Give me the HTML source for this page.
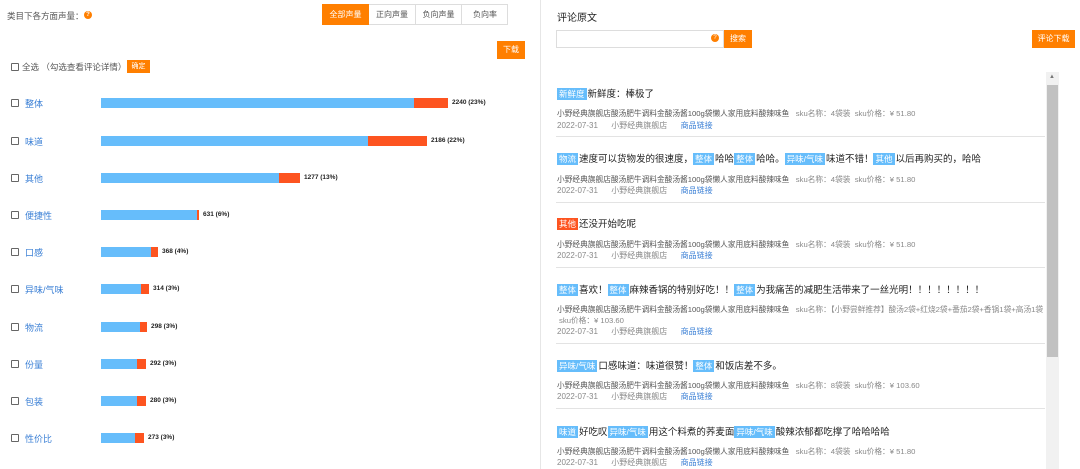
<!DOCTYPE html><html><head><meta charset="utf-8"><style>
*{margin:0;padding:0;box-sizing:border-box}
body{width:1080px;height:469px;overflow:hidden;background:#fff;font-family:"Liberation Sans","Noto Sans CJK SC",sans-serif;color:#333;position:relative;font-size:9px}
.a{position:absolute;white-space:nowrap}
.btn{background:#ff7f00;color:#fff;text-align:center}
.cb{width:8px;height:8px;border:1px solid #666;border-radius:1px}
.lab{color:#3a7fd5;font-size:9px}
.b{position:absolute;height:10px;background:#66bdfb}
.r{position:absolute;height:10px;background:#fd5420}
.v{font-size:6.5px;font-weight:bold;color:#222}
.t{font-size:9.5px;color:#222}
.tg{background:#66bdfb;color:#fff;padding:0 2px;font-size:8.5px;display:inline-block;line-height:12px;margin-right:1px}
.g{font-size:7.7px;color:#555}
.d{font-size:8px;color:#888}
.d i{font-style:normal;color:#3a7fd5}
.sep{position:absolute;left:556px;width:489px;height:1px;background:#e3e3e3}
</style></head><body>
<div class="a" style="left:7px;top:10px;font-size:8.5px;color:#555">类目下各方面声量：</div>
<div class="a" style="left:84px;top:11px;width:8px;height:8px;border-radius:50%;background:#ff7f00;color:#fff;font-size:6px;text-align:center;line-height:8px;font-weight:bold">?</div>
<div class="a" style="left:322px;top:4px;width:186px;height:21px;border:1px solid #ddd"></div>
<div class="a btn" style="left:322px;top:4px;width:47px;height:21px;line-height:21px;font-size:8px">全部声量</div>
<div class="a" style="left:369px;top:4px;width:47px;height:21px;line-height:21px;font-size:8px;color:#555;text-align:center;border-right:1px solid #ddd">正向声量</div>
<div class="a" style="left:416px;top:4px;width:46px;height:21px;line-height:21px;font-size:8px;color:#555;text-align:center;border-right:1px solid #ddd">负向声量</div>
<div class="a" style="left:462px;top:4px;width:46px;height:21px;line-height:21px;font-size:8px;color:#555;text-align:center">负向率</div>
<div class="a btn" style="left:497px;top:41px;width:28px;height:18px;line-height:18px;font-size:8px">下载</div>
<div class="a cb" style="left:11px;top:63px"></div>
<div class="a" style="left:22px;top:61px;font-size:8.5px;color:#555">全选 （勾选查看评论详情）</div>
<div class="a btn" style="left:127px;top:60px;width:23px;height:13px;line-height:13px;font-size:7px">确定</div>

<div class="a cb" style="left:11px;top:99px"></div><div class="a lab" style="left:25px;top:97px">整体</div><div class="b" style="left:101px;top:98px;width:313px"></div><div class="r" style="left:414px;top:98px;width:34px"></div><div class="a v" style="left:452px;top:99px">2240 (23%)</div>
<div class="a cb" style="left:11px;top:137px"></div><div class="a lab" style="left:25px;top:135px">味道</div><div class="b" style="left:101px;top:136px;width:267px"></div><div class="r" style="left:368px;top:136px;width:59px"></div><div class="a v" style="left:431px;top:137px">2186 (22%)</div>
<div class="a cb" style="left:11px;top:174px"></div><div class="a lab" style="left:25px;top:172px">其他</div><div class="b" style="left:101px;top:173px;width:178px"></div><div class="r" style="left:279px;top:173px;width:21px"></div><div class="a v" style="left:304px;top:174px">1277 (13%)</div>
<div class="a cb" style="left:11px;top:211px"></div><div class="a lab" style="left:25px;top:209px">便捷性</div><div class="b" style="left:101px;top:210px;width:96px"></div><div class="r" style="left:197px;top:210px;width:2px"></div><div class="a v" style="left:203px;top:211px">631 (6%)</div>
<div class="a cb" style="left:11px;top:248px"></div><div class="a lab" style="left:25px;top:246px">口感</div><div class="b" style="left:101px;top:247px;width:50px"></div><div class="r" style="left:151px;top:247px;width:7px"></div><div class="a v" style="left:162px;top:248px">368 (4%)</div>
<div class="a cb" style="left:11px;top:285px"></div><div class="a lab" style="left:25px;top:283px">异味/气味</div><div class="b" style="left:101px;top:284px;width:40px"></div><div class="r" style="left:141px;top:284px;width:8px"></div><div class="a v" style="left:153px;top:285px">314 (3%)</div>
<div class="a cb" style="left:11px;top:323px"></div><div class="a lab" style="left:25px;top:321px">物流</div><div class="b" style="left:101px;top:322px;width:39px"></div><div class="r" style="left:140px;top:322px;width:7px"></div><div class="a v" style="left:151px;top:323px">298 (3%)</div>
<div class="a cb" style="left:11px;top:360px"></div><div class="a lab" style="left:25px;top:358px">份量</div><div class="b" style="left:101px;top:359px;width:36px"></div><div class="r" style="left:137px;top:359px;width:9px"></div><div class="a v" style="left:150px;top:360px">292 (3%)</div>
<div class="a cb" style="left:11px;top:397px"></div><div class="a lab" style="left:25px;top:395px">包装</div><div class="b" style="left:101px;top:396px;width:36px"></div><div class="r" style="left:137px;top:396px;width:9px"></div><div class="a v" style="left:150px;top:397px">280 (3%)</div>
<div class="a cb" style="left:11px;top:434px"></div><div class="a lab" style="left:25px;top:432px">性价比</div><div class="b" style="left:101px;top:433px;width:34px"></div><div class="r" style="left:135px;top:433px;width:9px"></div><div class="a v" style="left:148px;top:434px">273 (3%)</div>

<div class="a" style="left:540px;top:0;width:1px;height:469px;background:#e6e6e6"></div>
<div class="a" style="left:557px;top:9px;font-size:10px;color:#222">评论原文</div>
<div class="a" style="left:556px;top:30px;width:168px;height:18px;border:1px solid #ddd"></div>
<div class="a" style="left:711px;top:34px;width:8px;height:8px;border-radius:50%;background:#ff7f00;color:#fff;font-size:6px;text-align:center;line-height:8px">?</div>
<div class="a btn" style="left:724px;top:30px;width:28px;height:18px;line-height:18px;font-size:8px">搜索</div>
<div class="a btn" style="left:1032px;top:30px;width:43px;height:18px;line-height:18px;font-size:8px">评论下载</div>
<div class="a" style="left:1046px;top:72px;width:13px;height:397px;background:#f1f1f1"></div>
<div class="a" style="left:1047px;top:85px;width:11px;height:272px;background:#c1c1c1"></div>
<div class="a" style="left:1049px;top:74px;font-size:6px;color:#777">▲</div>

<div class="a t" style="left:557px;top:86px"><span class="tg">新鲜度</span>新鲜度：棒极了</div>
<div class="a g" style="left:557px;top:108px">小野经典旗舰店酸汤肥牛调料金酸汤酱100g袋懒人家用底料酸辣味鱼 &nbsp;&nbsp;<span style="color:#888">sku名称：4袋装 &nbsp;sku价格：¥ 51.80</span></div>
<div class="a d" style="left:557px;top:120px">2022-07-31 &nbsp;&nbsp;&nbsp;&nbsp;&nbsp;小野经典旗舰店 &nbsp;&nbsp;&nbsp;&nbsp;&nbsp;<i>商品链接</i></div>
<div class="sep" style="top:136px"></div>

<div class="a t" style="left:557px;top:151px"><span class="tg">物流</span>速度可以货物发的很速度，<span class="tg">整体</span>哈哈<span class="tg">整体</span>哈哈。<span class="tg">异味/气味</span>味道不错！<span class="tg">其他</span>以后再购买的，哈哈</div>
<div class="a g" style="left:557px;top:174px">小野经典旗舰店酸汤肥牛调料金酸汤酱100g袋懒人家用底料酸辣味鱼 &nbsp;&nbsp;<span style="color:#888">sku名称：4袋装 &nbsp;sku价格：¥ 51.80</span></div>
<div class="a d" style="left:557px;top:185px">2022-07-31 &nbsp;&nbsp;&nbsp;&nbsp;&nbsp;小野经典旗舰店 &nbsp;&nbsp;&nbsp;&nbsp;&nbsp;<i>商品链接</i></div>
<div class="sep" style="top:202px"></div>

<div class="a t" style="left:557px;top:216px"><span class="tg" style="background:#fd5420">其他</span>还没开始吃呢</div>
<div class="a g" style="left:557px;top:239px">小野经典旗舰店酸汤肥牛调料金酸汤酱100g袋懒人家用底料酸辣味鱼 &nbsp;&nbsp;<span style="color:#888">sku名称：4袋装 &nbsp;sku价格：¥ 51.80</span></div>
<div class="a d" style="left:557px;top:250px">2022-07-31 &nbsp;&nbsp;&nbsp;&nbsp;&nbsp;小野经典旗舰店 &nbsp;&nbsp;&nbsp;&nbsp;&nbsp;<i>商品链接</i></div>
<div class="sep" style="top:267px"></div>

<div class="a t" style="left:557px;top:282px"><span class="tg">整体</span>喜欢！<span class="tg">整体</span>麻辣香锅的特别好吃！！<span class="tg">整体</span>为我痛苦的减肥生活带来了一丝光明！！！！！！！！</div>
<div class="a g" style="left:557px;top:304px">小野经典旗舰店酸汤肥牛调料金酸汤酱100g袋懒人家用底料酸辣味鱼 &nbsp;&nbsp;<span style="color:#888">sku名称：【小野尝鲜推荐】酸汤2袋+红烧2袋+番茄2袋+香锅1袋+高汤1袋</span></div>
<div class="a g" style="left:559px;top:315px;color:#888">sku价格：¥ 103.60</div>
<div class="a d" style="left:557px;top:326px">2022-07-31 &nbsp;&nbsp;&nbsp;&nbsp;&nbsp;小野经典旗舰店 &nbsp;&nbsp;&nbsp;&nbsp;&nbsp;<i>商品链接</i></div>
<div class="sep" style="top:343px"></div>

<div class="a t" style="left:557px;top:358px"><span class="tg">异味/气味</span>口感味道：味道很赞！<span class="tg">整体</span>和饭店差不多。</div>
<div class="a g" style="left:557px;top:380px">小野经典旗舰店酸汤肥牛调料金酸汤酱100g袋懒人家用底料酸辣味鱼 &nbsp;&nbsp;<span style="color:#888">sku名称：8袋装 &nbsp;sku价格：¥ 103.60</span></div>
<div class="a d" style="left:557px;top:391px">2022-07-31 &nbsp;&nbsp;&nbsp;&nbsp;&nbsp;小野经典旗舰店 &nbsp;&nbsp;&nbsp;&nbsp;&nbsp;<i>商品链接</i></div>
<div class="sep" style="top:408px"></div>

<div class="a t" style="left:557px;top:424px"><span class="tg">味道</span>好吃叹<span class="tg">异味/气味</span>用这个料煮的荞麦面<span class="tg">异味/气味</span>酸辣浓郁都吃撑了哈哈哈哈</div>
<div class="a g" style="left:557px;top:446px">小野经典旗舰店酸汤肥牛调料金酸汤酱100g袋懒人家用底料酸辣味鱼 &nbsp;&nbsp;<span style="color:#888">sku名称：4袋装 &nbsp;sku价格：¥ 51.80</span></div>
<div class="a d" style="left:557px;top:457px">2022-07-31 &nbsp;&nbsp;&nbsp;&nbsp;&nbsp;小野经典旗舰店 &nbsp;&nbsp;&nbsp;&nbsp;&nbsp;<i>商品链接</i></div>
</body></html>
